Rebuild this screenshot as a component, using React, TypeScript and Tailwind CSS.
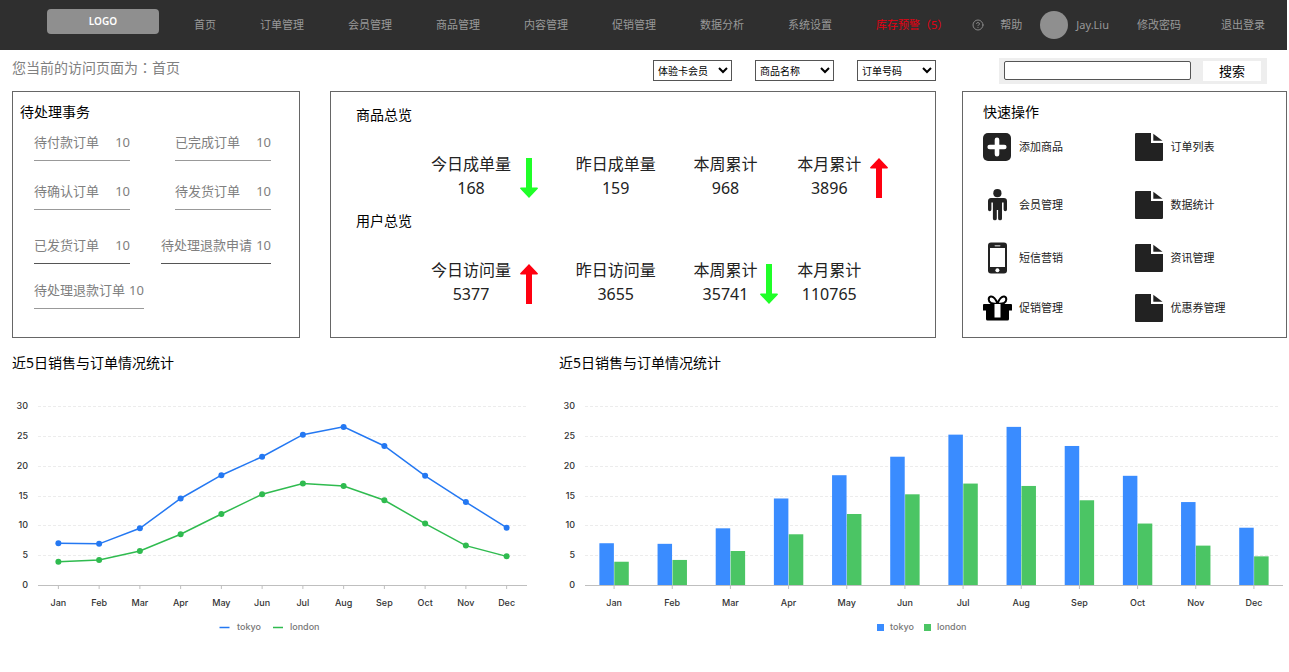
import type { ReactNode } from 'react'
import { CircleHelp } from 'lucide-react'

const NAV_ITEMS = ['首页', '订单管理', '会员管理', '商品管理', '内容管理', '促销管理', '数据分析', '系统设置']

const FILTERS = [
    { label: '会员类型', value: '体验卡会员' },
    { label: '商品', value: '商品名称' },
    { label: '订单', value: '订单号码' }
]

const PENDING_ROWS = [
    { spacing: 'mt-2.5', line: 'border-[#999]', items: [{ label: '待付款订单', count: 10 }, { label: '已完成订单', count: 10 }] },
    { spacing: 'mt-5', line: 'border-[#999]', items: [{ label: '待确认订单', count: 10 }, { label: '待发货订单', count: 10 }] },
    { spacing: 'mt-[25px]', line: 'border-[#555]', items: [{ label: '已发货订单', count: 10 }, { label: '待处理退款申请', count: 10 }] },
    { spacing: 'mt-4', line: 'border-[#999]', items: [{ label: '待处理退款订单', count: 10 }] }
]

interface Metric {
    label: string
    value: number
    trend?: 'up' | 'down'
    gap?: string
}

const PRODUCT_METRICS: Metric[] = [
    { label: '今日成单量', value: 168, trend: 'down', gap: 'ml-[9px]' },
    { label: '昨日成单量', value: 159 },
    { label: '本周累计', value: 968 },
    { label: '本月累计', value: 3896, trend: 'up', gap: 'ml-[9px]' }
]

const USER_METRICS: Metric[] = [
    { label: '今日访问量', value: 5377, trend: 'up', gap: 'ml-[9px]' },
    { label: '昨日访问量', value: 3655 },
    { label: '本周累计', value: 35741, trend: 'down', gap: 'ml-[3px]' },
    { label: '本月累计', value: 110765 }
]

const MONTHS = ['Jan', 'Feb', 'Mar', 'Apr', 'May', 'Jun', 'Jul', 'Aug', 'Sep', 'Oct', 'Nov', 'Dec']
const TOKYO = [7, 6.9, 9.5, 14.5, 18.4, 21.5, 25.2, 26.5, 23.3, 18.3, 13.9, 9.6]
const LONDON = [3.9, 4.2, 5.7, 8.5, 11.9, 15.2, 17, 16.6, 14.2, 10.3, 6.6, 4.8]
const TICKS = [0, 5, 10, 15, 20, 25, 30]

// Área do gráfico: base em y=212, topo (30) em y=33
const BASE_Y = 212
const scaleY = (value: number) => BASE_Y - (value * 179) / 30

function PlusIcon() {
    return (
        <svg width="28" height="28" viewBox="0 0 28 28">
            <rect width="28" height="28" rx="5" fill="#222" />
            <path d="M14 6.700v14.600M6.700 14h14.600" stroke="#fff" strokeWidth="4.600" strokeLinecap="round" />
        </svg>
    )
}

function PersonIcon() {
    return (
        <svg width="28" height="32" viewBox="0 0 28 32" fill="#222">
            <circle cx="14.4" cy="4.2" r="4.1" />
            <path d="M8 9h12.8a3.2 3.2 0 0 1 3.2 3.2v8.3a1.7 1.7 0 0 1-3.4 0v-7H19v15.9a1.9 1.9 0 0 1-3.9 0V21h-1.3v8.4a1.9 1.9 0 0 1-3.9 0V13.5H8.4v7a1.7 1.7 0 0 1-3.4 0v-8.3A3.2 3.2 0 0 1 8 9z" />
        </svg>
    )
}

function PhoneIcon() {
    return (
        <svg width="28" height="32" viewBox="0 0 28 32">
            <rect x="5" y="0.5" width="19" height="31" rx="3" fill="#222" />
            <rect x="7" y="6" width="15" height="19" fill="#fff" />
            <rect x="11.5" y="3" width="6" height="1.4" rx="0.7" fill="#aaa" />
            <circle cx="14.4" cy="28.2" r="2" fill="#fff" />
        </svg>
    )
}

function GiftIcon() {
    return (
        <svg width="29" height="26" viewBox="0 0 29 26">
            <path d="M1 9h27a1 1 0 0 1 1 1v5.5H26V24a1.5 1.5 0 0 1-1.500 1.500h-20A1.500 1.500 0 0 1 3 24v-8.500H0V10a1 1 0 0 1 1-1z" fill="#000" />
            <path d="M14.500 8.500C12.500 3.500 10 1.200 7.800 1.500 5 2 5 6.500 8 8c2 .8 4.500.7 6.500.5zM14.500 8.500C16.500 3.500 19 1.200 21.200 1.500 24 2 24 6.500 21 8c-2 .8-4.500.7-6.500.5z" fill="#fff" stroke="#000" strokeWidth="2" />
            <rect x="11.500" y="9" width="6" height="13.500" fill="#fff" />
        </svg>
    )
}

function FileIcon() {
    return (
        <svg width="28" height="28" viewBox="0 0 28 28" fill="#222">
            <path d="M1.200 0H16v10h12v16.800a1.200 1.200 0 0 1-1.200 1.200H1.200A1.200 1.200 0 0 1 0 26.800V1.200A1.200 1.200 0 0 1 1.200 0z" />
            <path d="M18.300 0.800l9.200 6.900h-9.200z" />
        </svg>
    )
}

const ACTIONS: { label: string; icon: ReactNode }[] = [
    { label: '添加商品', icon: <PlusIcon /> },
    { label: '订单列表', icon: <FileIcon /> },
    { label: '会员管理', icon: <PersonIcon /> },
    { label: '数据统计', icon: <FileIcon /> },
    { label: '短信营销', icon: <PhoneIcon /> },
    { label: '资讯管理', icon: <FileIcon /> },
    { label: '促销管理', icon: <GiftIcon /> },
    { label: '优惠券管理', icon: <FileIcon /> }
]

// Pontuação de largura total centralizada no quadro do caractere
function Punct({ children }: { children: string }) {
    return <span className="font-['Noto_Sans_CJK_TC',sans-serif]">{children}</span>
}

function TrendArrow({ trend }: { trend: 'up' | 'down' }) {
    return (
        <svg width="18" height="40" viewBox="0 0 18 40" className="block shrink-0">
            {trend === 'up' ? (
                <path d="M9 0l9 9.500-.6.9H12V40H6V10.400H.6L0 9.500z" fill="#ff0010" />
            ) : (
                <path d="M9 40l9-9.500-.6-.9H12V0H6v29.600H.6l-.6.9z" fill="#1fff28" />
            )}
        </svg>
    )
}

function MetricRow({ metrics }: { metrics: Metric[] }) {
    return (
        <div className="grid grid-cols-[145fr_118fr_104fr_138fr] pl-[100px]">
            {metrics.map((metric, i) => (
                <div key={i} className="flex items-center">
                    <dl className="text-center text-base leading-6 whitespace-nowrap text-[#222]">
                        <dt>{metric.label}</dt>
                        <dd>{metric.value}</dd>
                    </dl>
                    {metric.trend && (
                        <span className={`pt-1 ${metric.gap}`}>
                            <TrendArrow trend={metric.trend} />
                        </span>
                    )}
                </div>
            ))}
        </div>
    )
}

function ChartAxes({ left, right, gridRight }: { left: number; right: number; gridRight: number }) {
    const band = (right - left) / 12
    return (
        <g>
            {TICKS.map(tick => (
                <g key={tick}>
                    {tick > 0 && (
                        <line x1={left} x2={gridRight} y1={Math.round(scaleY(tick)) + 0.5} y2={Math.round(scaleY(tick)) + 0.5} stroke="#ececec" strokeDasharray="3 2" />
                    )}
                    <text x={left - 10} y={scaleY(tick) + 3} textAnchor="end" fill="#333">{tick}</text>
                </g>
            ))}
            <line x1={left} x2={right} y1={BASE_Y + 0.5} y2={BASE_Y + 0.5} stroke="#bfbfbf" />
            {MONTHS.map((month, i) => (
                <g key={month}>
                    <line x1={left + band * (i + 0.5)} x2={left + band * (i + 0.5)} y1={BASE_Y} y2={BASE_Y + 4} stroke="#bfbfbf" />
                    <text x={left + band * (i + 0.5)} y="233" textAnchor="middle" fill="#333">{month}</text>
                </g>
            ))}
        </g>
    )
}

function LineChart() {
    const left = 26
    const right = 515
    const band = (right - left) / 12
    const series = [
        { name: 'tokyo', data: TOKYO, color: '#2478f2' },
        { name: 'london', data: LONDON, color: '#2fbb4f' }
    ]

    return (
        <svg viewBox="0 0 547 272" className="block w-full font-[Inter,sans-serif] text-[9px] font-medium">
            <ChartAxes left={left} right={right} gridRight={right} />
            {series.map(({ name, data, color }) => (
                <g key={name}>
                    <polyline
                        points={data.map((v, i) => `${left + band * (i + 0.5)},${scaleY(v)}`).join(' ')}
                        fill="none"
                        stroke={color}
                        strokeWidth="1.5"
                    />
                    {data.map((v, i) => (
                        <circle key={i} cx={left + band * (i + 0.5)} cy={scaleY(v)} r="3" fill={color} />
                    ))}
                </g>
            ))}
            <path d="M207.500 254.500h10" stroke="#2478f2" strokeWidth="1.500" />
            <text x="225" y="257" fill="#777">tokyo</text>
            <path d="M261 254.500h10" stroke="#2fbb4f" strokeWidth="1.500" />
            <text x="278" y="257" fill="#777">london</text>
        </svg>
    )
}

function BarChart() {
    const left = 26
    const right = 724
    const band = (right - left) / 12

    return (
        <svg viewBox="0 0 728 272" className="block w-full font-[Inter,sans-serif] text-[9px] font-medium">
            <ChartAxes left={left} right={right} gridRight={720} />
            {MONTHS.map((month, i) => {
                const center = left + band * (i + 0.5)
                return (
                    <g key={month}>
                        <rect x={center - 14.7} y={scaleY(TOKYO[i])} width="14.5" height={BASE_Y - scaleY(TOKYO[i])} fill="#3a8cff" />
                        <rect x={center + 0.2} y={scaleY(LONDON[i])} width="14.5" height={BASE_Y - scaleY(LONDON[i])} fill="#4bc564" />
                    </g>
                )
            })}
            <rect x="318" y="251" width="7" height="7" fill="#3a8cff" />
            <text x="331" y="257" fill="#777">tokyo</text>
            <rect x="365" y="251" width="7" height="7" fill="#4bc564" />
            <text x="378" y="257" fill="#777">london</text>
        </svg>
    )
}

export default function App() {
    return (
        <div className="min-h-screen bg-white pr-0.5 pb-6 font-['Noto_Sans','Noto_Sans_CJK_SC',sans-serif] text-black">
            <header className="flex h-[50px] items-center bg-[#2f2f2f] pr-[22px] pl-[47px] text-[11px] whitespace-nowrap text-[#999]">
                <a href="#" className="-mt-2 flex h-[25px] w-28 shrink-0 items-center justify-center rounded bg-[#8f8f8f] text-[10px] font-semibold text-white">
                    LOGO
                </a>
                <nav className="ml-[35px] flex items-center gap-11">
                    {NAV_ITEMS.map(item => (
                        <a key={item} href="#">{item}</a>
                    ))}
                    <a href="#" className="text-[#e60012]">
                        库存预警<Punct>（</Punct>5<Punct>）</Punct>
                    </a>
                </nav>
                <div className="ml-auto flex items-center">
                    <a href="#" className="flex items-center gap-4">
                        <CircleHelp size={12} strokeWidth={2} className="text-[#888]" />
                        帮助
                    </a>
                    <a href="#" className="ml-[18px] flex items-center gap-2">
                        <span className="size-7 rounded-full bg-[#8f8f8f]" />
                        Jay.Liu
                    </a>
                    <a href="#" className="ml-7">修改密码</a>
                    <a href="#" className="ml-10">退出登录</a>
                </div>
            </header>

            <div className="flex h-[41px] items-center pr-5 pl-3">
                <p className="-mt-1.5 text-sm text-[#808080]">
                    您当前的访问页面为<Punct>：</Punct>首页
                </p>
                <div className="ml-auto flex gap-[23px]">
                    {FILTERS.map(filter => (
                        <select
                            key={filter.value}
                            aria-label={filter.label}
                            className="h-[21px] w-[79px] border border-[#555] bg-white text-[10px] text-black"
                        >
                            <option>{filter.value}</option>
                        </select>
                    ))}
                </div>
                <form className="ml-[63px] flex h-[26px] items-center bg-[#eee] pr-1.5 pl-[5px]">
                    <input type="search" aria-label="搜索" className="h-[19px] w-[187px] rounded-xs border border-[#555] bg-white px-1 text-xs" />
                    <button type="button" className="ml-3 h-5 w-[58px] bg-white text-[13px] leading-5">搜索</button>
                </form>
            </div>

            <main className="pl-3">
                <div className="grid grid-cols-[288fr_30fr_606fr_26fr_325fr]">
                    <section className="h-[247px] border border-[#666] pt-2.5 pr-7 pl-[7px]">
                        <h2 className="text-sm leading-5">待处理事务</h2>
                        {PENDING_ROWS.map((row, i) => (
                            <div key={i} className={`flex justify-between pl-3.5 ${row.spacing}`}>
                                {row.items.map(item => (
                                    <a
                                        key={item.label}
                                        href="#"
                                        className={`flex min-w-24 justify-between gap-1 border-b pb-2 text-[13px] leading-5 whitespace-nowrap text-[#808080] ${row.line}`}
                                    >
                                        <span>{item.label}</span>
                                        <span>{item.count}</span>
                                    </a>
                                ))}
                            </div>
                        ))}
                    </section>

                    <section className="col-start-3 h-[247px] border border-[#666] pt-[13px]">
                        <h2 className="pl-[25px] text-sm leading-5">商品总览</h2>
                        <div className="mt-[27px]">
                            <MetricRow metrics={PRODUCT_METRICS} />
                        </div>
                        <h2 className="mt-[11px] pl-[25px] text-sm leading-5">用户总览</h2>
                        <div className="mt-[27px]">
                            <MetricRow metrics={USER_METRICS} />
                        </div>
                    </section>

                    <section className="col-start-5 h-[247px] border border-[#666] pt-2.5 pl-5">
                        <h2 className="text-sm leading-5">快速操作</h2>
                        <div className="mt-[9px] grid grid-cols-2 grid-rows-[58px_53px_50px_32px]">
                            {ACTIONS.map(action => (
                                <a key={action.label} href="#" className="flex h-8 items-center text-[11px] text-[#222]">
                                    <span className="flex w-9">{action.icon}</span>
                                    {action.label}
                                </a>
                            ))}
                        </div>
                    </section>
                </div>

                <div className="mt-[15px] grid grid-cols-[547fr_728fr]">
                    <section>
                        <h2 className="text-sm leading-5">近5日销售与订单情况统计</h2>
                        <LineChart />
                    </section>
                    <section>
                        <h2 className="text-sm leading-5">近5日销售与订单情况统计</h2>
                        <BarChart />
                    </section>
                </div>
            </main>
        </div>
    )
}
